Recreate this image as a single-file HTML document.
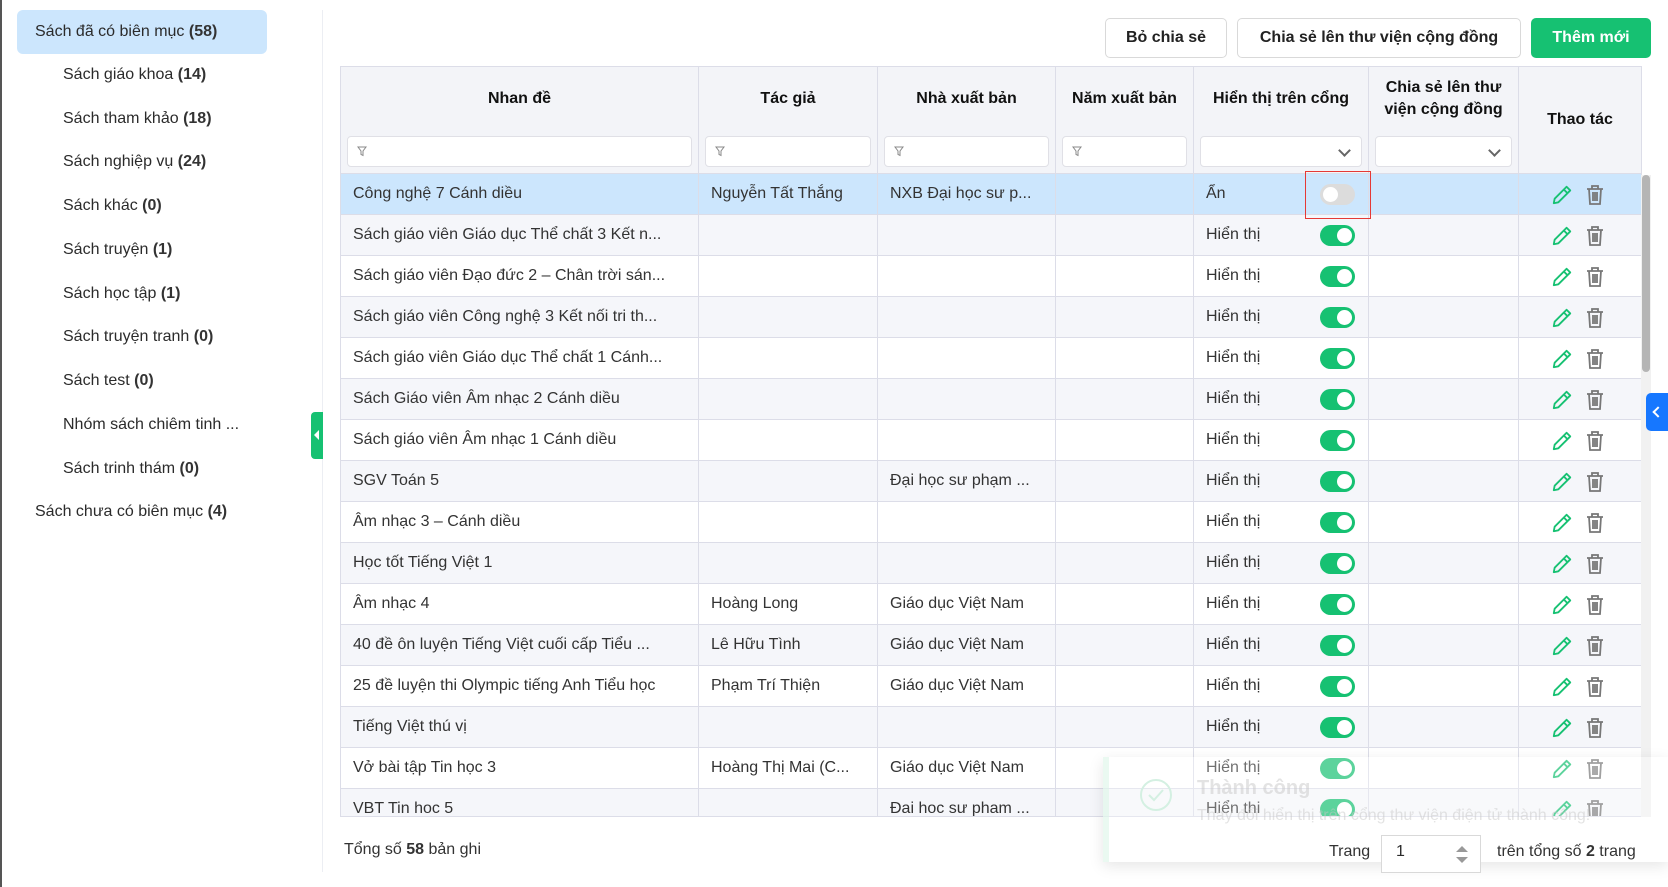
<!DOCTYPE html>
<html><head><meta charset="utf-8">
<style>
*{box-sizing:border-box;margin:0;padding:0}
body{width:1668px;height:887px;background:#fff;font-family:"Liberation Sans",Arial,sans-serif;color:#2b2b2b;font-size:16px;position:relative;overflow:hidden}
.lb{position:absolute;left:0;top:0;width:2px;height:887px;background:#555}
.side div{position:absolute;height:44px;line-height:44px;white-space:nowrap}
.side b{font-weight:bold;color:#333}
.hl{left:17px;top:10px;width:250px;background:#cce6fd;border-radius:6px;padding-left:18px}
.div{position:absolute;left:322px;top:10px;width:1px;height:862px;background:#eceef3}
.gtab{position:absolute;left:311px;top:412px;width:12px;height:47px;background:#16c172;border-radius:4px 0 0 4px}
.gtab:after{content:"";position:absolute;left:3px;top:18px;border:5px solid transparent;border-right:5px solid #fff;border-left:0}
.btn{position:absolute;top:18px;height:40px;line-height:38px;border:1px solid #d9d9d9;border-radius:5px;text-align:center;font-weight:bold;font-size:16px;background:#fff;color:#222}
.wrap{position:absolute;left:340px;top:66px;width:1302px;height:751px;overflow:hidden;z-index:2;border-bottom:1px solid #dcdde8}
table{border-collapse:collapse;table-layout:fixed;width:1301px}
th{background:#f3f4f8;border:1px solid #dcdde8;font-weight:bold;font-size:16px;color:#111;vertical-align:top;padding-top:23px;height:107px;position:relative}
td{border:1px solid #dcdde8;height:41px;padding:0 12px;white-space:nowrap;overflow:hidden;position:relative;font-size:16px;color:#333}
tr.g td{background:#f5f6fa}
tr:not(.g):not(.s) td{background:#fff}
tr.s td{background:#cce6fd}
.f{position:absolute;left:6px;right:6px;top:69px;height:31px;background:#fff;border:1px solid #e0e0e6;border-radius:4px}
.f svg{position:absolute;left:9px;top:9px}
.dd:after{content:"";position:absolute;right:12px;top:9px;width:7px;height:7px;border-right:2px solid #666;border-bottom:2px solid #666;transform:rotate(45deg)}
.tg{position:absolute;left:126px;top:10px;width:35px;height:21px;border-radius:11px;background:#16c172}
.tg:after{content:"";position:absolute;right:3px;top:3px;width:15px;height:15px;border-radius:50%;background:#fff}
.tg.off{background:#dcdcdc}.tg.off:after{left:3px;right:auto}
.ic{position:absolute;top:10px}
.scroll{position:absolute;left:1641px;top:175px;width:10px;height:642px;background:#f1f1f1;z-index:3}
.thumb{position:absolute;left:1642px;top:175px;width:8px;height:197px;background:#b5b5b5;border-radius:4px;z-index:3}
.btab{position:absolute;left:1646px;top:393px;width:22px;height:38px;background:#1677ff;border-radius:5px 0 0 5px;z-index:4}
.btab:after{content:"";position:absolute;left:8px;top:15px;width:6px;height:6px;border-left:2px solid #fff;border-bottom:2px solid #fff;transform:rotate(45deg)}
.toast{position:absolute;left:1103px;top:757px;width:565px;height:105px;background:rgba(255,255,255,.3);box-shadow:0 4px 14px rgba(0,0,0,.1);border-left:6px solid rgba(220,245,232,.6);z-index:3}
</style></head><body>
<div class="lb"></div>
<div class="side">
<div class="hl">Sách đã có biên mục <b>(58)</b></div>
<div style="left:63px;top:53px">Sách giáo khoa <b>(14)</b></div>
<div style="left:63px;top:97px">Sách tham khảo <b>(18)</b></div>
<div style="left:63px;top:140px">Sách nghiệp vụ <b>(24)</b></div>
<div style="left:63px;top:184px">Sách khác <b>(0)</b></div>
<div style="left:63px;top:228px">Sách truyện <b>(1)</b></div>
<div style="left:63px;top:272px">Sách học tập <b>(1)</b></div>
<div style="left:63px;top:315px">Sách truyện tranh <b>(0)</b></div>
<div style="left:63px;top:359px">Sách test <b>(0)</b></div>
<div style="left:63px;top:403px">Nhóm sách chiêm tinh ...</div>
<div style="left:63px;top:447px">Sách trinh thám <b>(0)</b></div>
<div style="left:35px;top:490px">Sách chưa có biên mục <b>(4)</b></div>
</div>
<div class="div"></div>
<div class="gtab"></div>
<div class="btn" style="left:1105px;width:122px">Bỏ chia sẻ</div>
<div class="btn" style="left:1237px;width:284px">Chia sẻ lên thư viện cộng đồng</div>
<div class="btn" style="left:1531px;width:120px;background:#16c172;border-color:#16c172;color:#fff">Thêm mới</div>

<div class="wrap">
<table>
<colgroup><col style="width:358px"><col style="width:179px"><col style="width:178px"><col style="width:138px"><col style="width:175px"><col style="width:150px"><col style="width:123px"></colgroup>
<tr>
<th>Nhan đề<div class="f"><svg width="10" height="11" viewBox="0 0 10 11"><path d="M1 1h8L6 5v4.5L4 8.5V5z" fill="none" stroke="#888"/></svg></div></th>
<th>Tác giả<div class="f"><svg width="10" height="11" viewBox="0 0 10 11"><path d="M1 1h8L6 5v4.5L4 8.5V5z" fill="none" stroke="#888"/></svg></div></th>
<th>Nhà xuất bản<div class="f"><svg width="10" height="11" viewBox="0 0 10 11"><path d="M1 1h8L6 5v4.5L4 8.5V5z" fill="none" stroke="#888"/></svg></div></th>
<th>Năm xuất bản<div class="f"><svg width="10" height="11" viewBox="0 0 10 11"><path d="M1 1h8L6 5v4.5L4 8.5V5z" fill="none" stroke="#888"/></svg></div></th>
<th>Hiển thị trên cổng<div class="f dd"></div></th>
<th style="padding-top:10px;line-height:22px">Chia sẻ lên thư<br>viện cộng đồng<div class="f dd"></div></th>
<th style="vertical-align:middle;padding-top:0">Thao tác</th>
</tr>
<tr class="s"><td>Công nghệ 7 Cánh diều</td><td>Nguyễn Tất Thắng</td><td>NXB Đại học sư p...</td><td></td><td>Ẩn<span class="tg off"></span></td><td></td><td>ICON</td></tr>
<tr class="g"><td>Sách giáo viên Giáo dục Thể chất 3 Kết n...</td><td></td><td></td><td></td><td>Hiển thị<span class="tg"></span></td><td></td><td>ICON</td></tr>
<tr><td>Sách giáo viên Đạo đức 2 – Chân trời sán...</td><td></td><td></td><td></td><td>Hiển thị<span class="tg"></span></td><td></td><td>ICON</td></tr>
<tr class="g"><td>Sách giáo viên Công nghệ 3 Kết nối tri th...</td><td></td><td></td><td></td><td>Hiển thị<span class="tg"></span></td><td></td><td>ICON</td></tr>
<tr><td>Sách giáo viên Giáo dục Thể chất 1 Cánh...</td><td></td><td></td><td></td><td>Hiển thị<span class="tg"></span></td><td></td><td>ICON</td></tr>
<tr class="g"><td>Sách Giáo viên Âm nhạc 2 Cánh diều</td><td></td><td></td><td></td><td>Hiển thị<span class="tg"></span></td><td></td><td>ICON</td></tr>
<tr><td>Sách giáo viên Âm nhạc 1 Cánh diều</td><td></td><td></td><td></td><td>Hiển thị<span class="tg"></span></td><td></td><td>ICON</td></tr>
<tr class="g"><td>SGV Toán 5</td><td></td><td>Đại học sư phạm ...</td><td></td><td>Hiển thị<span class="tg"></span></td><td></td><td>ICON</td></tr>
<tr><td>Âm nhạc 3 – Cánh diều</td><td></td><td></td><td></td><td>Hiển thị<span class="tg"></span></td><td></td><td>ICON</td></tr>
<tr class="g"><td>Học tốt Tiếng Việt 1</td><td></td><td></td><td></td><td>Hiển thị<span class="tg"></span></td><td></td><td>ICON</td></tr>
<tr><td>Âm nhạc 4</td><td>Hoàng Long</td><td>Giáo dục Việt Nam</td><td></td><td>Hiển thị<span class="tg"></span></td><td></td><td>ICON</td></tr>
<tr class="g"><td>40 đề ôn luyện Tiếng Việt cuối cấp Tiểu ...</td><td>Lê Hữu Tình</td><td>Giáo dục Việt Nam</td><td></td><td>Hiển thị<span class="tg"></span></td><td></td><td>ICON</td></tr>
<tr><td>25 đề luyện thi Olympic tiếng Anh Tiểu học</td><td>Phạm Trí Thiện</td><td>Giáo dục Việt Nam</td><td></td><td>Hiển thị<span class="tg"></span></td><td></td><td>ICON</td></tr>
<tr class="g"><td>Tiếng Việt thú vị</td><td></td><td></td><td></td><td>Hiển thị<span class="tg"></span></td><td></td><td>ICON</td></tr>
<tr><td>Vở bài tập Tin học 3</td><td>Hoàng Thị Mai (C...</td><td>Giáo dục Việt Nam</td><td></td><td>Hiển thị<span class="tg"></span></td><td></td><td>ICON</td></tr>
<tr class="g"><td>VBT Tin hoc 5</td><td></td><td>Đai hoc sư pham ...</td><td></td><td>Hiển thi<span class="tg"></span></td><td></td><td>ICON</td></tr>
</table>
</div>
<div style="position:absolute;left:1305px;top:171px;width:66px;height:48px;border:1.5px solid #e53935;z-index:3"></div>
<div class="scroll"></div><div class="thumb"></div>
<div style="position:absolute;left:344px;top:841px;font-size:16px;color:#333">Tổng số <b>58</b> bản ghi</div>
<div class="toast">
<svg style="position:absolute;left:30px;top:21px" width="34" height="34"><circle cx="17" cy="17" r="15" fill="none" stroke="#d4f0e2" stroke-width="2"/><path d="M10 17l5 5 9-10" fill="none" stroke="#d4f0e2" stroke-width="2"/></svg>
<div style="position:absolute;left:88px;top:20px;font-size:20px;font-weight:bold;color:rgba(200,200,200,.5)">Thành công</div>
<div style="position:absolute;left:88px;top:50px;font-size:16px;color:rgba(200,200,200,.5)">Thay đổi hiển thị trên cổng thư viện điện tử thành công!</div>
</div>
<div style="position:absolute;left:1329px;top:843px;font-size:16px;color:#333;z-index:4">Trang</div>
<div style="position:absolute;left:1381px;top:835px;width:100px;height:38px;border:1px solid #d9d9d9;background:#fff;padding:7px 14px;font-size:16px;z-index:4">1
<span style="position:absolute;right:12px;top:10px;border:6px solid transparent;border-bottom:6px solid #999;border-top:0"></span>
<span style="position:absolute;right:12px;top:21px;border:6px solid transparent;border-top:6px solid #999;border-bottom:0"></span></div>
<div style="position:absolute;left:1497px;top:843px;font-size:16px;color:#333;z-index:4">trên tổng số <b>2</b> trang</div>
<div class="btab"></div>
<script>
var ic='<svg class="ic" style="left:32px" width="22" height="22" viewBox="0 0 24 24"><path d="M17 3l4 4L8 20l-5 1 1-5z M14 6l4 4" fill="none" stroke="#16c172" stroke-width="2" stroke-linejoin="round"/></svg><svg class="ic" style="left:66px" width="20" height="22" viewBox="0 0 20 22"><path d="M2 5h16M7 5V2h6v3M4 5l1 15h10l1-15M8 8v9M10 8v9M12 8v9" fill="none" stroke="#777" stroke-width="1.8"/></svg>';
document.querySelectorAll('td').forEach(function(t){if(t.textContent=='ICON'){t.innerHTML=ic;}});
</script>
</body></html>
